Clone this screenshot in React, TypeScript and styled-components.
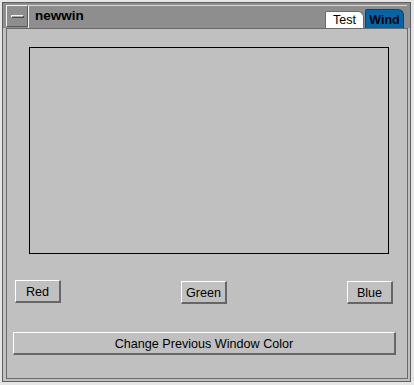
import styled, { createGlobalStyle } from 'styled-components'

const Global = createGlobalStyle`
  html, body {
    margin: 0;
    padding: 0;
    background: #e6e6e6;
  }
  body {
    font-family: "Liberation Sans", Arial, sans-serif;
  }
`

const Page = styled.div`
  width: 414px;
  height: 385px;
  padding: 2px 0 0 2px;
  box-sizing: border-box;
`

const Window = styled.div`
  width: 409px;
  height: 380px;
  box-sizing: border-box;
  border: 1px solid #5e5e5e;
  background: #c0c0c0;
  display: flex;
  flex-direction: column;
`

const TitleBar = styled.div`
  height: 25px;
  box-sizing: border-box;
  padding: 2px 3px 0 3px;
  background: #8e8e8e;
  display: flex;
  align-items: flex-start;
`

const MinBox = styled.div`
  width: 22px;
  height: 22px;
  box-sizing: border-box;
  border-top: 1px solid #f4f4f4;
  border-left: 1px solid #f4f4f4;
  border-right: 1px solid #5a5a5a;
  border-bottom: 1px solid #5a5a5a;
  display: flex;
  align-items: center;
  justify-content: center;
`

const MinBar = styled.div`
  width: 13px;
  height: 3px;
  box-sizing: border-box;
  border-top: 1px solid #f4f4f4;
  border-left: 1px solid #f4f4f4;
  border-right: 1px solid #4a4a4a;
  border-bottom: 1px solid #4a4a4a;
  background: #a8a8a8;
`

const Label = styled.div`
  flex: 1;
  height: 23px;
  box-sizing: border-box;
  border-top: 1px solid #d8d8d8;
  border-left: 1px solid #f4f4f4;
  display: flex;
  align-items: flex-end;
  justify-content: space-between;
  padding: 0 3px 0 6px;
`

const Title = styled.span`
  font-size: 13.5px;
  font-weight: bold;
  color: #000;
  line-height: 16px;
  margin-bottom: 4px;
`

const Tabs = styled.div`
  display: flex;
  align-items: flex-end;
  gap: 1px;
`

const Tab = styled.div<{ $active?: boolean }>`
  width: ${p => (p.$active ? 39 : 39)}px;
  height: ${p => (p.$active ? 19 : 17)}px;
  box-sizing: border-box;
  background: ${p => (p.$active ? '#0066aa' : '#ffffff')};
  border: 1px solid ${p => (p.$active ? '#1c3f66' : '#6a6a6a')};
  border-bottom: none;
  border-radius: 2px 6px 0 0;
  font-size: 12.5px;
  font-weight: ${p => (p.$active ? 'bold' : 'normal')};
  color: #000;
  display: flex;
  align-items: flex-end;
  justify-content: center;
  line-height: 14px;
  padding-bottom: 1px;
`

const Body = styled.div`
  flex: 1;
  display: flex;
  padding: 0 2px 2px 3px;
`

const Panel = styled.div`
  flex: 1;
  box-sizing: border-box;
  border: 1px solid #6a6a6a;
  display: flex;
  flex-direction: column;
  padding: 18px 11px 0 6px;
`

const Canvas = styled.div`
  width: 360px;
  height: 207px;
  box-sizing: border-box;
  border: 1px solid #000;
  margin-left: 16px;
`

const ButtonRow = styled.div`
  display: flex;
  justify-content: space-between;
  align-items: flex-start;
  margin-top: 27px;
  padding: 0 3px 0 2px;
`

const Button = styled.button<{ $wide?: boolean; $lift?: number }>`
  width: ${p => (p.$wide ? '383px' : '46px')};
  height: 23px;
  box-sizing: border-box;
  margin: ${p => (p.$lift ? `-${p.$lift}px` : '0')} 0 0 0;
  padding: 1px 0 0 0;
  background: #c0c0c0;
  border-style: solid;
  border-width: 1px 2px 2px 1px;
  border-color: #ffffff #666666 #666666 #ffffff;
  border-radius: 0;
  font-family: "Liberation Sans", Arial, sans-serif;
  font-size: 12.6px;
  color: #000;
  display: flex;
  align-items: center;
  justify-content: center;
`

const WideRow = styled.div`
  margin-top: 28px;
  display: flex;
`

export default function App() {
  return (
    <Page>
      <Global />
      <Window>
        <TitleBar>
          <MinBox>
            <MinBar />
          </MinBox>
          <Label>
            <Title>newwin</Title>
            <Tabs>
              <Tab>Test</Tab>
              <Tab $active>Wind</Tab>
            </Tabs>
          </Label>
        </TitleBar>
        <Body>
          <Panel>
            <Canvas />
            <ButtonRow>
              <Button $lift={1}>Red</Button>
              <Button>Green</Button>
              <Button>Blue</Button>
            </ButtonRow>
            <WideRow>
              <Button $wide>Change Previous Window Color</Button>
            </WideRow>
          </Panel>
        </Body>
      </Window>
    </Page>
  )
}
